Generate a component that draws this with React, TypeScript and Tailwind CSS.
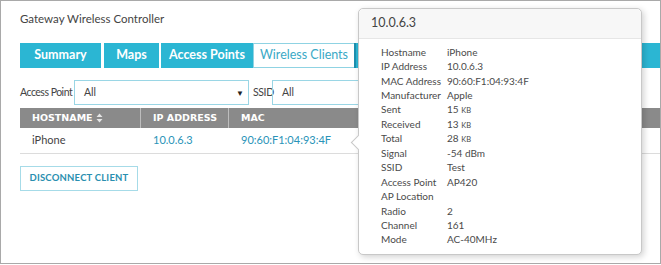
import React from "react";

const details: [string, string][] = [
  ["Hostname", "iPhone"],
  ["IP Address", "10.0.6.3"],
  ["MAC Address", "90:60:F1:04:93:4F"],
  ["Manufacturer", "Apple"],
  ["Sent", "15 KB"],
  ["Received", "13 KB"],
  ["Total", "28 KB"],
  ["Signal", "-54 dBm"],
  ["SSID", "Test"],
  ["Access Point", "AP420"],
  ["AP Location", ""],
  ["Radio", "2"],
  ["Channel", "161"],
  ["Mode", "AC-40MHz"],
];

function Kb({ v }: { v: string }) {
  // "KB" is drawn as small caps in the popover
  if (v.endsWith(" KB")) {
    return (
      <>
        {v.slice(0, -3)} <span className="text-[7.5px] tracking-wide">KB</span>
      </>
    );
  }
  return <>{v}</>;
}

export default function App() {
  const font = { fontFamily: 'Lato, "Open Sans", sans-serif' };

  return (
    <div
      className="relative w-[661px] h-[264px] border border-[#a9a9a9] bg-white text-[#333] overflow-hidden whitespace-nowrap"
      style={font}
    >
      <div className="pl-[19px] pt-[10px]">
        <div className="text-[11.5px] leading-[16px] text-[#444]">Gateway Wireless Controller</div>

        {/* tabs */}
        <div className="flex mt-[16px] h-[25px] text-[12.5px] font-bold">
          <div className="w-[81px] bg-[#2bb6d3] text-white flex items-center justify-center">Summary</div>
          <div className="w-[55px] ml-[3px] bg-[#2bb6d3] text-white flex items-center justify-center">Maps</div>
          <div className="w-[92px] ml-[2px] bg-[#2bb6d3] text-white flex items-center justify-center">Access Points</div>
          <div className="w-[101px] bg-white border border-[#8fd3e3] border-r-0 text-[#3aa9c6] font-normal flex items-center justify-center">
            Wireless Clients
          </div>
          <div className="flex-1 bg-[#2bb6d3] border-l-[2px] border-[#1f8fae]" />
        </div>

        {/* filters */}
        <div className="flex items-center mt-[12px] h-[25px] text-[10.5px] text-[#444]">
          <span className="w-[52px] shrink-0 tracking-[-0.5px]">Access Point</span>
          <div className="ml-[2px] w-[175px] h-[25px] border border-[#9ad6e5] flex items-center justify-between pl-[9px] pr-[4px]">
            <span>All</span>
            <span className="text-[8px] text-[#222]">▼</span>
          </div>
          <span className="ml-[4px] w-[19px] tracking-[-0.4px]">SSID</span>
          <div className="w-[200px] h-[25px] border border-[#9ad6e5] flex items-center pl-[9px]">All</div>
        </div>

        {/* table */}
        <div className="mt-[3px] w-[640px]">
          <div
            className="flex h-[20px] bg-[#8a8a8a] text-white text-[9.5px] font-bold items-center"
            style={{ fontFamily: '"DejaVu Sans", "Open Sans", sans-serif' }}
          >
            <div className="w-[121px] h-full flex items-center pl-[12px] border-r border-[#bdbdbd] gap-[3px]">
              HOSTNAME
              <svg width="7" height="10" viewBox="0 0 7 10">
                <path d="M0.5 4 L3.5 0.5 L6.5 4 Z M0.5 6 L3.5 9.5 L6.5 6 Z" fill="#e6e6e6" />
              </svg>
            </div>
            <div className="w-[88px] h-full flex items-center pl-[12px] border-r border-[#bdbdbd]">IP ADDRESS</div>
            <div className="flex-1 h-full flex items-center pl-[12px]">MAC</div>
          </div>
          <div className="flex h-[26px] items-center text-[11px] border-b border-[#dcdcdc]">
            <div className="w-[121px] pl-[12px] text-[#444]">iPhone</div>
            <div className="w-[88px] pl-[12px] text-[#2a93b8]">10.0.6.3</div>
            <div className="flex-1 pl-[12px] text-[#2a93b8]">90:60:F1:04:93:4F</div>
          </div>
        </div>

        <button className="mt-[12px] w-[118px] h-[25px] border border-[#a6dbe8] text-[#2a8fb0] text-[9.5px] font-bold tracking-[0.2px]">
          DISCONNECT CLIENT
        </button>
      </div>

      {/* client details popover */}
      <div className="absolute left-[357px] top-[7px] w-[284px] h-[247px] bg-white border border-[#c8c8c8] rounded-[5px] shadow-[2px_2px_6px_rgba(0,0,0,0.18)]">
        <div className="h-[30px] bg-[#f7f7f7] border-b border-[#e6e6e6] rounded-t-[5px] flex items-center pl-[12px] text-[12.5px] text-[#444]">
          10.0.6.3
        </div>
        <div className="pt-[6px] pl-[22px] text-[10px] text-[#4a4a4a]">
          {details.map(([k, v]) => (
            <div key={k} className="flex h-[14.45px] items-center">
              <span className="w-[66px]">{k}</span>
              <span>
                <Kb v={v} />
              </span>
            </div>
          ))}
        </div>
        <div className="absolute left-[-6px] top-[128px] w-[11px] h-[11px] bg-white border-l border-b border-[#c8c8c8] rotate-45" />
      </div>
    </div>
  );
}
